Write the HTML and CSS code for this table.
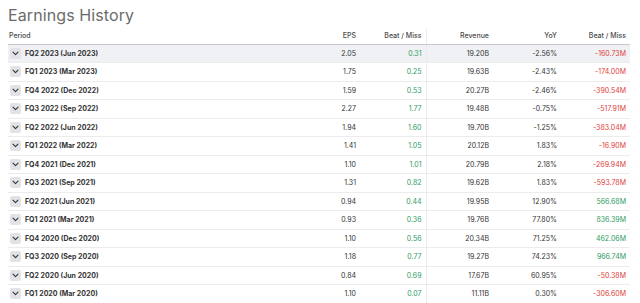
FILE: index.html
```html
<!DOCTYPE html>
<html lang="en">
<head>
    <meta charset="UTF-8">
    <title>Earnings History</title>
    <link rel="stylesheet" href="styles.css">
</head>
<body>
    <h2 class="title">Earnings History</h2>
    <table class="earnings">
        <colgroup>
            <col class="c-period">
            <col class="c-eps">
            <col class="c-beat">
            <col class="c-rev">
            <col class="c-yoy">
            <col class="c-beat2">
        </colgroup>
        <thead>
            <tr>
                <th class="period">Period</th>
                <th>EPS</th>
                <th class="split">Beat / Miss</th>
                <th>Revenue</th>
                <th>YoY</th>
                <th>Beat / Miss</th>
            </tr>
        </thead>
        <tbody id="rows"></tbody>
    </table>

    <script>
        const data = [
            ['FQ2 2023 (Jun 2023)', '2.05', '0.31', '19.20B', '-2.56%', '-160.73M'],
            ['FQ1 2023 (Mar 2023)', '1.75', '0.25', '19.63B', '-2.43%', '-174.00M'],
            ['FQ4 2022 (Dec 2022)', '1.59', '0.53', '20.27B', '-2.46%', '-390.54M'],
            ['FQ3 2022 (Sep 2022)', '2.27', '1.77', '19.48B', '-0.75%', '-517.91M'],
            ['FQ2 2022 (Jun 2022)', '1.94', '1.60', '19.70B', '-1.25%', '-383.04M'],
            ['FQ1 2022 (Mar 2022)', '1.41', '1.05', '20.12B', '1.83%', '-16.90M'],
            ['FQ4 2021 (Dec 2021)', '1.10', '1.01', '20.79B', '2.18%', '-269.94M'],
            ['FQ3 2021 (Sep 2021)', '1.31', '0.82', '19.62B', '1.83%', '-593.78M'],
            ['FQ2 2021 (Jun 2021)', '0.94', '0.44', '19.95B', '12.90%', '566.68M'],
            ['FQ1 2021 (Mar 2021)', '0.93', '0.36', '19.76B', '77.80%', '836.39M'],
            ['FQ4 2020 (Dec 2020)', '1.10', '0.56', '20.34B', '71.25%', '462.06M'],
            ['FQ3 2020 (Sep 2020)', '1.18', '0.77', '19.27B', '74.23%', '966.74M'],
            ['FQ2 2020 (Jun 2020)', '0.84', '0.69', '17.67B', '60.95%', '-50.38M'],
            ['FQ1 2020 (Mar 2020)', '1.10', '0.07', '11.11B', '0.30%', '-306.60M']
        ];

        const chevron = '<span class="toggle"><svg width="7" height="5" viewBox="0 0 7 5"><path d="M1 1.2 L3.5 3.6 L6 1.2" fill="none" stroke="#333" stroke-width="1.1" stroke-linecap="round" stroke-linejoin="round"/></svg></span>';

        function tone(v) {
            return v.startsWith('-') ? 'neg' : 'pos';
        }

        const body = document.getElementById('rows');
        data.forEach((r, i) => {
            const tr = document.createElement('tr');
            if (i === 0) tr.className = 'active';
            tr.innerHTML = `
                <td class="period">${chevron}<span class="label">${r[0]}</span></td>
                <td>${r[1]}</td>
                <td class="split ${tone(r[2])}">${r[2]}</td>
                <td>${r[3]}</td>
                <td>${r[4]}</td>
                <td class="${tone(r[5])}">${r[5]}</td>`;
            body.appendChild(tr);
        });
    </script>
</body>
</html>
```

FILE: styles.css
```css
* {
    box-sizing: border-box;
}
body {
    margin: 0;
    padding: 0 10px 0 8px;
    font-family: 'Inter', 'Helvetica Neue', sans-serif;
    background: #ffffff;
    color: #333333;
}
.title {
    margin: 0;
    padding-top: 5px;
    height: 28px;
    font-size: 16px;
    font-weight: 400;
    color: #6b6b6b;
    letter-spacing: 0.1px;
}
.earnings {
    width: 622px;
    border-collapse: collapse;
    table-layout: fixed;
    font-size: 7px;
}
.c-period { width: 292px; }
.c-eps { width: 60px; }
.c-beat { width: 66px; }
.c-rev { width: 67px; }
.c-yoy { width: 68px; }
.c-beat2 { width: 69px; }
.earnings th {
    height: 16px;
    font-weight: 500;
    color: #4a4a4a;
    text-align: right;
    padding: 0 4px 0 0;
    border-bottom: 1px solid #c9c9c9;
}
.earnings th.period {
    text-align: left;
    padding-left: 1px;
}
.earnings td {
    height: 18.5px;
    text-align: right;
    padding: 0 4px 0 0;
    border-bottom: 1px solid #ececec;
    color: #333333;
}
.earnings td.period {
    text-align: left;
    padding-left: 2px;
}
.earnings .split {
    border-right: 1px solid #ececec;
}
.earnings tr.active td {
    background: #f0f1f4;
}
.toggle {
    display: inline-flex;
    align-items: center;
    justify-content: center;
    width: 11px;
    height: 11px;
    border-radius: 2px;
    background: #e2e3e6;
    vertical-align: middle;
    margin-right: 4px;
}
.label {
    font-weight: 700;
    vertical-align: middle;
}
.pos {
    color: #2e9b64 !important;
}
.neg {
    color: #e0403a !important;
}
```
